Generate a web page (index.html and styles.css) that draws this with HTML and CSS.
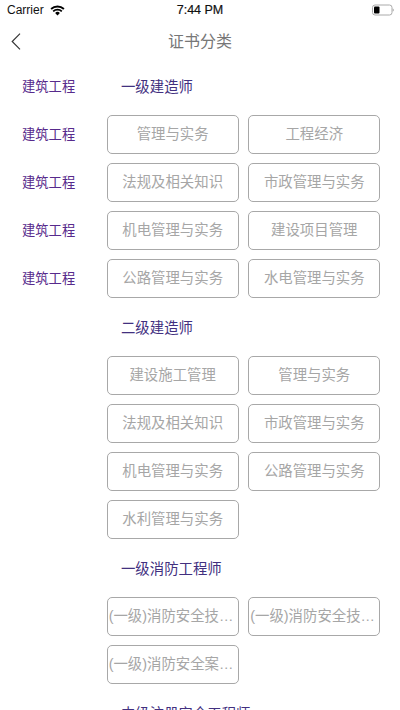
FILE: index.html
```html
<!DOCTYPE html>
<html lang="zh">
<head>
<meta charset="utf-8">
<title>证书分类</title>
<link rel="stylesheet" href="styles.css">
</head>
<body>
<div class="app">
  <div class="status">
    <div class="status-left">
      <span>Carrier</span>
      <svg class="wifi" viewBox="0 0 16 12" width="15" height="11"><path d="M8 11.5 5.400 8.700a3.700 3.700 0 0 1 5.200 0z" fill="#000"/><path d="M1 4.400a10.200 10.200 0 0 1 14 0M3.300 6.900a6.900 6.900 0 0 1 9.400 0" fill="none" stroke="#000" stroke-width="2"/></svg>
    </div>
    <div class="status-time">7:44 PM</div>
    <div class="status-right">
      <svg viewBox="0 0 22 12" width="22" height="12"><rect x="0.5" y="1" width="19.5" height="10" rx="2.5" fill="none" stroke="#aaa"/><rect x="2" y="2.5" width="5.5" height="7" rx="1" fill="#000"/><path d="M20.700 4.400c.8.3 1.100.9 1.100 1.600s-.3 1.300-1.100 1.600z" fill="#aaa"/></svg>
    </div>
  </div>
  <div class="nav">
    <svg class="back" viewBox="0 0 10 17" width="10" height="17"><path d="M9 .7 1.200 8.500l7.800 7.800" fill="none" stroke="#333" stroke-width="1.15"/></svg>
    <div class="title">证书分类</div>
  </div>
  <div class="body">
    <ul class="side">
      <li>建筑工程</li>
      <li>建筑工程</li>
      <li>建筑工程</li>
      <li>建筑工程</li>
      <li>建筑工程</li>
    </ul>
    <div class="main">
      <section class="group">
        <h2>一级建造师</h2>
        <div class="grid">
          <a class="btn">管理与实务</a><a class="btn">工程经济</a>
          <a class="btn">法规及相关知识</a><a class="btn">市政管理与实务</a>
          <a class="btn">机电管理与实务</a><a class="btn">建设项目管理</a>
          <a class="btn">公路管理与实务</a><a class="btn">水电管理与实务</a>
        </div>
      </section>
      <section class="group">
        <h2>二级建造师</h2>
        <div class="grid">
          <a class="btn">建设施工管理</a><a class="btn">管理与实务</a>
          <a class="btn">法规及相关知识</a><a class="btn">市政管理与实务</a>
          <a class="btn">机电管理与实务</a><a class="btn">公路管理与实务</a>
          <a class="btn">水利管理与实务</a>
        </div>
      </section>
      <section class="group">
        <h2>一级消防工程师</h2>
        <div class="grid">
          <a class="btn">(一级)消防安全技术实务</a><a class="btn">(一级)消防安全技术综合能力</a>
          <a class="btn">(一级)消防安全案例分析</a>
        </div>
      </section>
      <section class="group">
        <h2>中级注册安全工程师</h2>
      </section>
    </div>
  </div>
</div>
</body>
</html>
```
FILE: styles.css
```css
* { box-sizing: border-box; }
html, body { margin: 0; padding: 0; }
body { background: #fff; font-family: "Noto Sans CJK SC", "Noto Sans", sans-serif; }
.app { width: 400px; height: 710px; overflow: hidden; }
.status { height: 20px; display: flex; align-items: center; justify-content: space-between; padding: 0 6px 0 7px; position: relative; font: 12px "Liberation Sans", Arial, sans-serif; color: #111; }
.status-left { display: flex; align-items: center; gap: 6px; }
.status-time { position: absolute; left: 0; right: 0; text-align: center; font-size: 12.5px; -webkit-text-stroke: 0.2px #111; }
.status-right { display: flex; align-items: center; }
.nav { height: 42px; padding-bottom: 2px; display: flex; align-items: center; justify-content: center; position: relative; }
.back { position: absolute; left: 11px; top: 13px; }
.title { font-size: 16px; color: #777; }
.body { display: flex; }
.side { list-style: none; margin: 0; padding: 0 0 0 22px; width: 106.67px; flex: none; }
.side li { height: 48px; padding-bottom: 2px; display: flex; align-items: center; font-size: 13.3px; color: #572a8c; white-space: nowrap; }
.main { width: 273.6px; padding-top: 4px; display: flex; flex-direction: column; gap: 9px; }
.group { display: flex; flex-direction: column; gap: 9px; }
.group h2 { margin: 0; height: 40px; padding: 0 0 2px 14.3px; display: flex; align-items: center; font-size: 14.4px; font-weight: 400; color: #42307f; white-space: nowrap; }
.grid { display: grid; grid-template-columns: 132px 132px; column-gap: 9.6px; row-gap: 9px; }
.btn { display: block; height: 39px; line-height: 37px; border: 1px solid #a8a8a8; border-radius: 5px; padding: 0 1px; text-align: center; font-family: "Liberation Sans", "Noto Sans CJK SC", sans-serif; font-size: 14.4px; color: #a6a6a6; white-space: nowrap; overflow: hidden; text-overflow: ellipsis; }
```
